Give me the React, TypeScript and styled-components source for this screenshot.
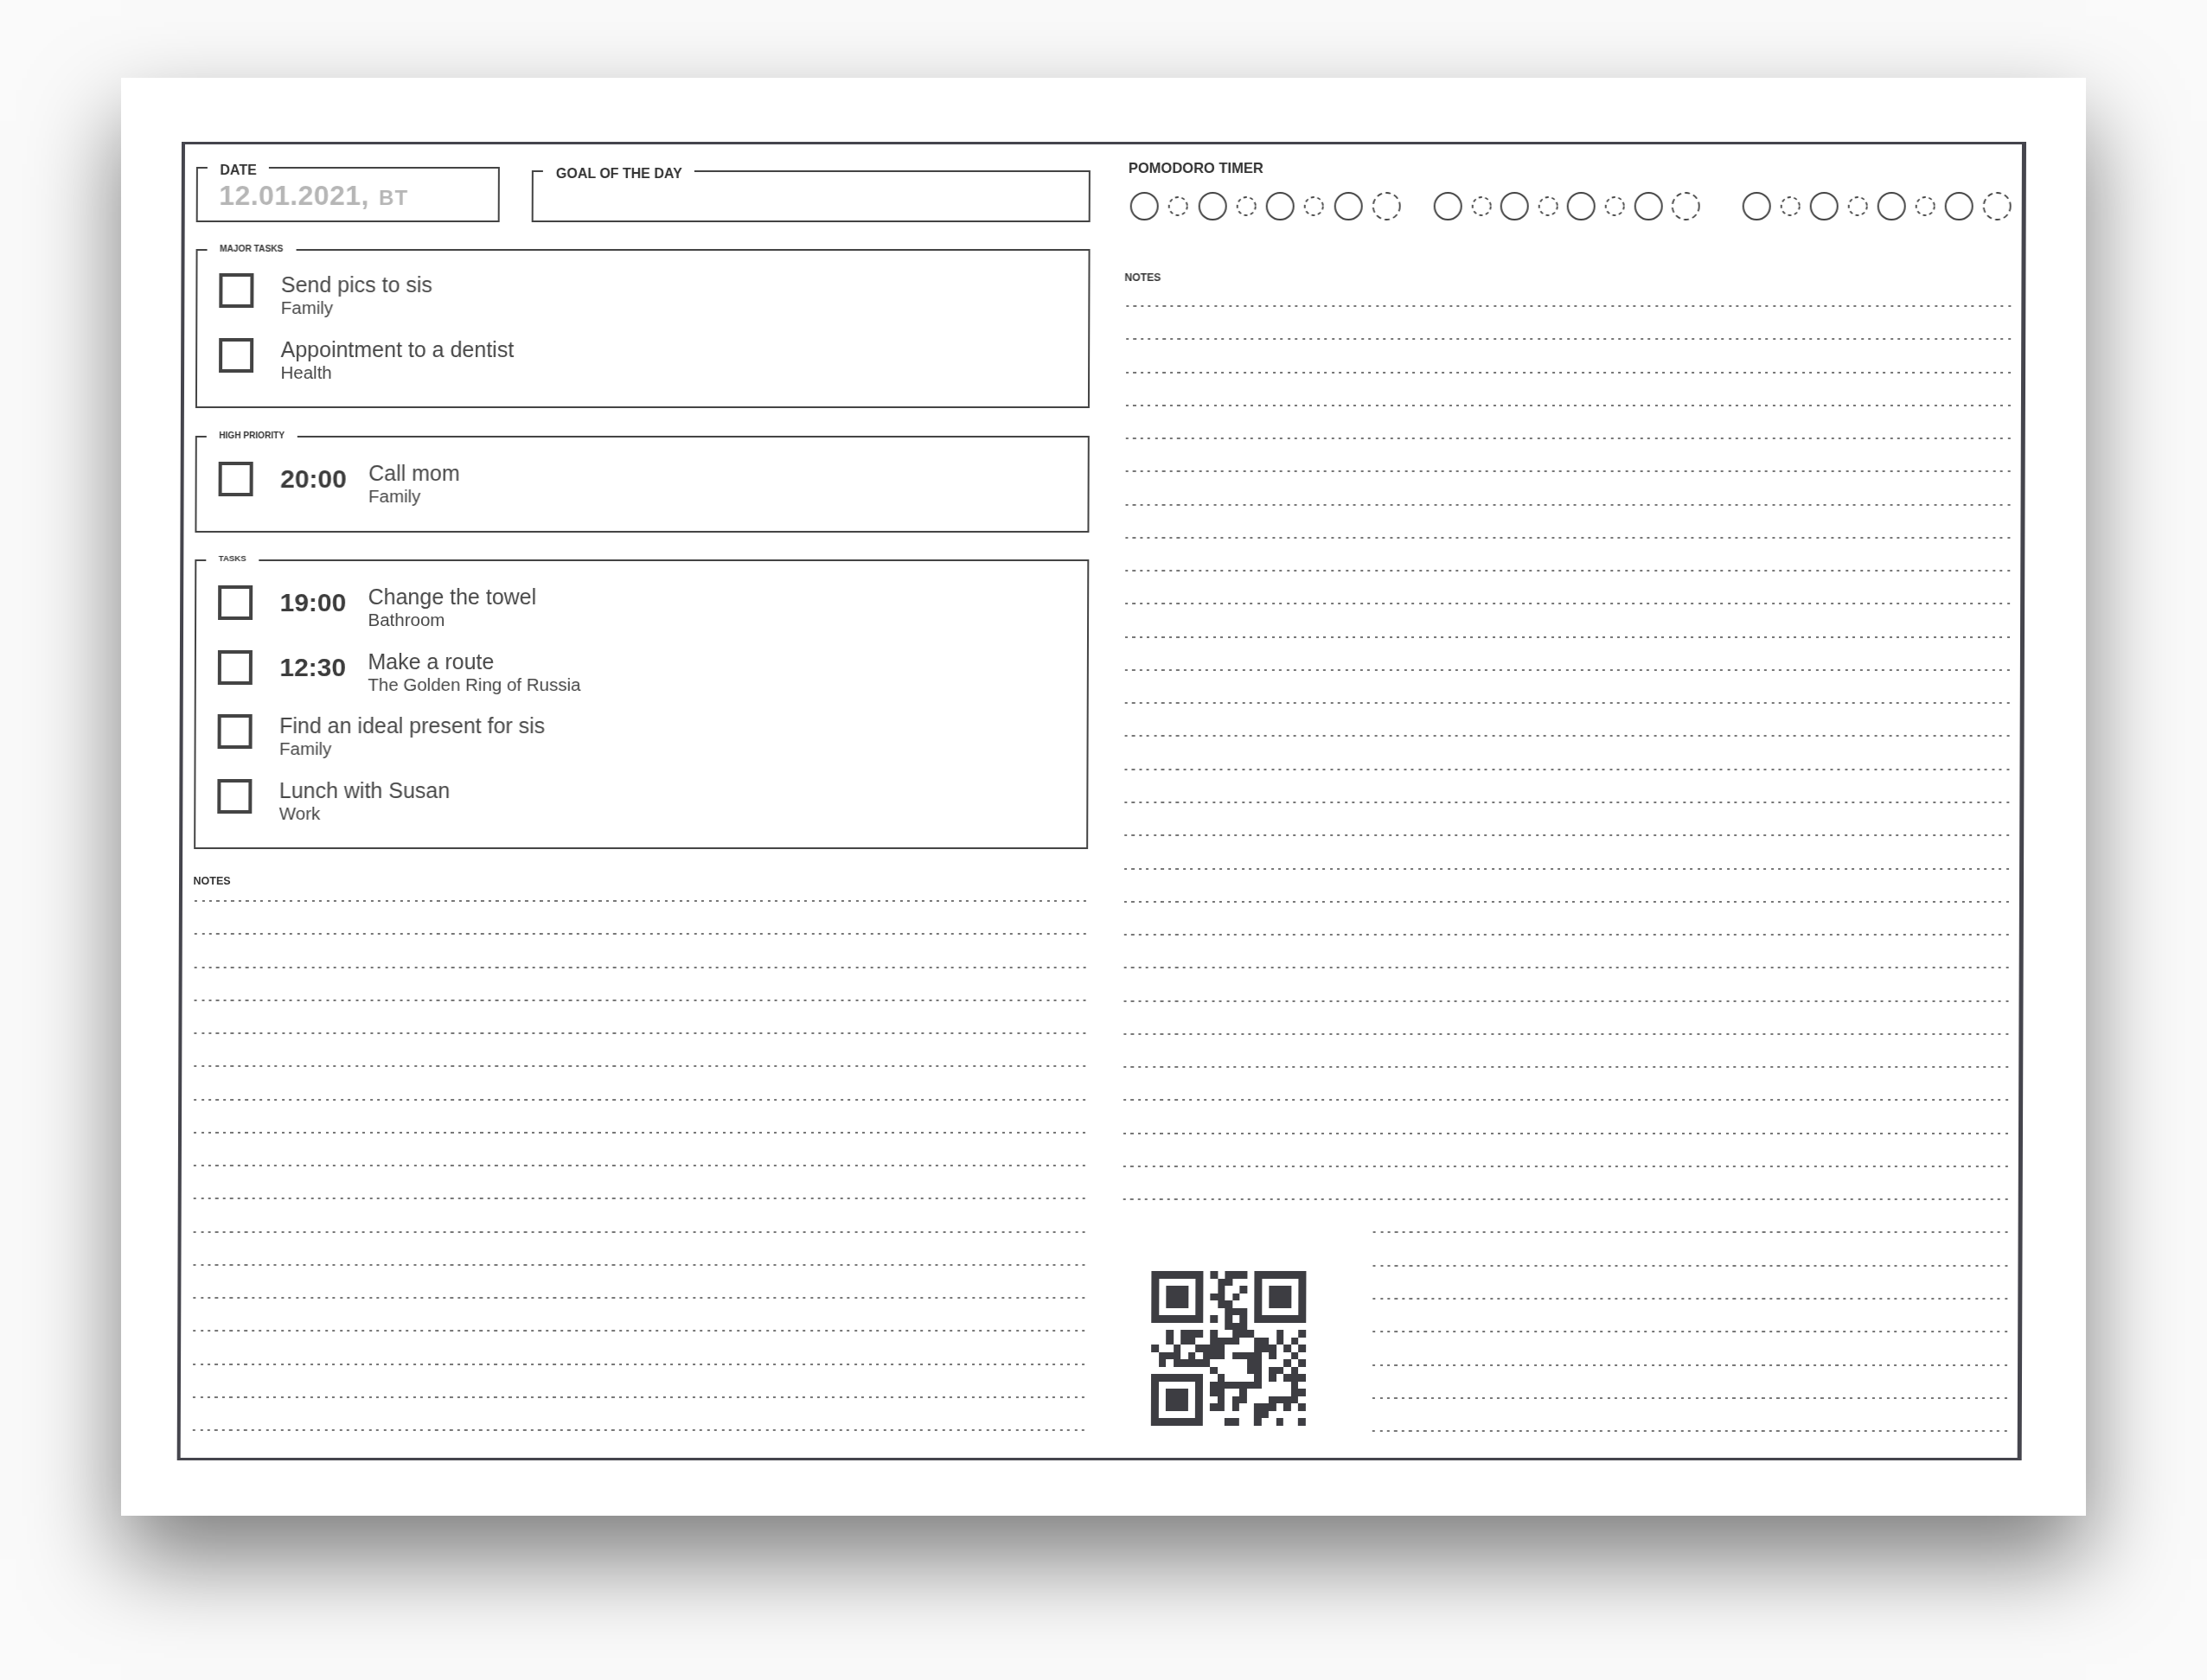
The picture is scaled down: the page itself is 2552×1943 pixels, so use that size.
import React from "react";
import styled, { createGlobalStyle } from "styled-components";

const Global = createGlobalStyle`
  html, body { margin: 0; padding: 0; background: #fafafa; }
  body { font-family: "Liberation Sans", Arial, sans-serif; color: #3c3c3c; }
`;

const Page = styled.div`
  width: 2552px;
  height: 1943px;
  padding: 90px 0 0 140px;
  box-sizing: border-box;
  overflow: hidden;
`;

const Paper = styled.main`
  width: 2272px;
  height: 1663px;
  box-sizing: border-box;
  padding: 74px 0 0 70px;
  background: #fff;
  box-shadow: 0 50px 100px rgba(0, 0, 0, 0.5);
`;

const Frame = styled.div`
  width: 2133px;
  height: 1525px;
  box-sizing: border-box;
  border: 3px solid #45454d;
  border-left-width: 4px;
  border-right-width: 5px;
  padding: 18px 10px 0 12.5px;
  display: grid;
  grid-template-columns: 1034.5px 1027px;
  column-gap: 40px;
  transform: skewX(-0.2deg);
  transform-origin: top left;
  filter: blur(0.45px);
`;

const Column = styled.section`
  display: flex;
  flex-direction: column;
  min-width: 0;
`;

const TopRow = styled.div`
  display: flex;
  align-items: flex-end;
  justify-content: space-between;
  height: 64px;
  margin-top: 8px;
`;

const Box = styled.div<{ $w?: number; $h: number; $pad?: number; $mt?: number }>`
  position: relative;
  box-sizing: border-box;
  width: ${(p) => (p.$w ? `${p.$w}px` : "100%")};
  height: ${(p) => p.$h}px;
  margin-top: ${(p) => p.$mt ?? 0}px;
  border: 2px solid #444;
  padding: ${(p) => p.$pad ?? 0}px 0 0 25px;
`;

const Legend = styled.span<{ $size: number; $top: number }>`
  position: absolute;
  left: 11px;
  top: ${(p) => p.$top}px;
  padding: 0 14px 0 15px;
  background: #fff;
  font-size: ${(p) => p.$size}px;
  font-weight: 700;
  line-height: ${(p) => (p.$size > 12 ? 18 : 14)}px;
  color: #333;
  white-space: nowrap;
`;

const DateValue = styled.div`
  padding-top: 13px;
  font-size: 32px;
  font-weight: 700;
  line-height: 36px;
  letter-spacing: 0.4px;
  color: #b6b6b6;
  white-space: nowrap;
`;

const Weekday = styled.span`
  margin-left: 2px;
  font-size: 24px;
  letter-spacing: 2px;
`;

const Row = styled.div`
  display: flex;
  align-items: flex-start;
  height: 74.5px;
`;

const Check = styled.span`
  flex: none;
  box-sizing: border-box;
  width: 40px;
  height: 40px;
  margin-top: 1px;
  margin-right: 32px;
  border: 4px solid #444;
`;

const Time = styled.span`
  flex: none;
  width: 102px;
  padding-top: 3px;
  font-size: 30px;
  font-weight: 700;
  line-height: 36px;
  color: #3c3c3c;
`;

const TaskText = styled.div`
  display: flex;
  flex-direction: column;
`;

const Title = styled.span`
  font-size: 25px;
  line-height: 28px;
  color: #474747;
  white-space: nowrap;
`;

const Sub = styled.span`
  font-size: 20.5px;
  line-height: 26px;
  color: #474747;
  white-space: nowrap;
`;

const NotesLabel = styled.h3<{ $mt: number; $size: number }>`
  margin: ${(p) => p.$mt}px 0 0;
  font-size: ${(p) => p.$size}px;
  font-weight: 700;
  line-height: 14px;
  color: #333;
`;

const Lines = styled.div<{ $mt: number; $ml?: number; $w?: number }>`
  display: flex;
  flex-direction: column;
  gap: 36.28px;
  margin: ${(p) => p.$mt}px 0 0 ${(p) => p.$ml ?? 0}px;
  width: ${(p) => (p.$w ? `${p.$w}px` : "100%")};
  flex: none;
`;

const Line = styled.div`
  height: 2px;
  background-image: repeating-linear-gradient(
    90deg,
    #777 0 3px,
    transparent 3px 8.5px
  );
`;

const PomodoroTitle = styled.h2`
  margin: 0;
  padding-left: 4px;
  font-size: 16.5px;
  font-weight: 700;
  line-height: 18px;
  color: #333;
`;

const Timer = styled.div`
  display: flex;
  margin-top: 18px;
  padding-left: 6px;
  height: 34px;
`;

const TimerGroup = styled.div<{ $ml?: number; $gap: number }>`
  display: flex;
  align-items: center;
  gap: ${(p) => p.$gap}px;
  margin-left: ${(p) => p.$ml ?? 0}px;
`;

const Ring = styled.svg`
  display: block;
  flex: none;
  overflow: visible;
`;

const BottomRow = styled.div`
  display: flex;
  align-items: flex-start;
  margin-top: 36.28px;
`;

const QrBox = styled.svg`
  flex: none;
  display: block;
  width: 179px;
  height: 179px;
  margin: 46px 0 0 35px;
`;

const RightLinesWrap = styled.div`
  margin-left: 77px;
  width: 738px;
`;

const QR_ROWS: number[][] = [
  [8, 10, 11, 12],
  [9, 10],
  [9, 12],
  [8, 9, 11],
  [9, 10],
  [10, 11, 12],
  [8, 10, 12],
  [10, 11, 12],
  [2, 4, 5, 6, 8, 11, 12, 13, 17, 20],
  [2, 4, 5, 8, 9, 10, 11, 14, 15, 17, 19],
  [0, 3, 6, 7, 8, 9, 14, 15, 16, 18, 20],
  [1, 2, 3, 5, 7, 8, 9, 11, 12, 13, 14, 16, 19],
  [1, 3, 4, 5, 6, 7, 13, 14, 18, 20],
  [8, 13, 14, 16, 17, 19],
  [9, 14, 16, 18, 19, 20],
  [8, 9, 10, 11, 12, 13, 14, 19],
  [8, 9, 12, 19, 20],
  [9, 11, 12, 16, 17, 18, 19],
  [8, 9, 11, 14, 15, 16, 18, 20],
  [14, 15],
  [10, 11, 14, 17, 20],
];

const Finder = ({ x, y }: { x: number; y: number }) => (
  <g>
    <path
      fillRule="evenodd"
      d={`M${x} ${y}h7v7h-7zM${x + 1} ${y + 1}v5h5v-5z`}
    />
    <rect x={x + 2} y={y + 2} width={3} height={3} />
  </g>
);

const QrCode = () => (
  <QrBox viewBox="0 0 21 21" fill="#3d3d42" shapeRendering="crispEdges">
    <Finder x={0} y={0} />
    <Finder x={14} y={0} />
    <Finder x={0} y={14} />
    {QR_ROWS.map((cols, r) =>
      cols.map((c) => <rect key={`${r}-${c}`} x={c} y={r} width={1} height={1} />)
    )}
  </QrBox>
);

const Circle = ({ size, dash }: { size: number; dash?: string }) => (
  <Ring width={size} height={size} viewBox={`0 0 ${size} ${size}`}>
    <circle
      cx={size / 2}
      cy={size / 2}
      r={size / 2 - 1}
      fill="none"
      stroke="#444"
      strokeWidth={dash ? 1.8 : 2}
      strokeDasharray={dash}
    />
  </Ring>
);

const Group = ({ ml, gap }: { ml?: number; gap: number }) => (
  <TimerGroup $ml={ml} $gap={gap}>
    <Circle size={33} />
    <Circle size={23} dash="4 3.6" />
    <Circle size={33} />
    <Circle size={23} dash="4 3.6" />
    <Circle size={33} />
    <Circle size={23} dash="4 3.6" />
    <Circle size={33} />
    <Circle size={33} dash="6 4.2" />
  </TimerGroup>
);

type Task = { time?: string; title: string; sub: string };

const Tasks = ({ items }: { items: Task[] }) => (
  <>
    {items.map((t) => (
      <Row key={t.title}>
        <Check />
        {t.time && <Time>{t.time}</Time>}
        <TaskText>
          <Title>{t.title}</Title>
          <Sub>{t.sub}</Sub>
        </TaskText>
      </Row>
    ))}
  </>
);

const range = (n: number) => Array.from({ length: n }, (_, i) => i);

export default function App() {
  return (
    <Page>
      <Global />
      <Paper>
        <Frame>
          <Column>
            <TopRow>
              <Box $w={351} $h={64}>
                <Legend $size={16} $top={-7}>DATE</Legend>
                <DateValue>
                  12.01.2021, <Weekday>ВТ</Weekday>
                </DateValue>
              </Box>
              <Box $w={646} $h={60}>
                <Legend $size={16} $top={-7}>GOAL OF THE DAY</Legend>
              </Box>
            </TopRow>

            <Box $h={184} $mt={31} $pad={25}>
              <Legend $size={10.2} $top={-9}>MAJOR TASKS</Legend>
              <Tasks
                items={[
                  { title: "Send pics to sis", sub: "Family" },
                  { title: "Appointment to a dentist", sub: "Health" },
                ]}
              />
            </Box>

            <Box $h={112} $mt={32} $pad={27}>
              <Legend $size={10.1} $top={-9}>HIGH PRIORITY</Legend>
              <Tasks items={[{ time: "20:00", title: "Call mom", sub: "Family" }]} />
            </Box>

            <Box $h={335} $mt={31} $pad={27}>
              <Legend $size={9.6} $top={-10}>TASKS</Legend>
              <Tasks
                items={[
                  { time: "19:00", title: "Change the towel", sub: "Bathroom" },
                  { time: "12:30", title: "Make a route", sub: "The Golden Ring of Russia" },
                  { title: "Find an ideal present for sis", sub: "Family" },
                  { title: "Lunch with Susan", sub: "Work" },
                ]}
              />
            </Box>

            <NotesLabel $mt={30} $size={12.5}>NOTES</NotesLabel>
            <Lines $mt={15} $ml={1} $w={1037}>
              {range(17).map((i) => (
                <Line key={i} />
              ))}
            </Lines>
          </Column>

          <Column>
            <PomodoroTitle>POMODORO TIMER</PomodoroTitle>
            <Timer>
              <Group gap={11.3} />
              <Group gap={10.6} ml={38} />
              <Group gap={11} ml={49} />
            </Timer>
            <NotesLabel $mt={59} $size={12.2}>NOTES</NotesLabel>
            <Lines $mt={25} $ml={2} $w={1025}>
              {range(28).map((i) => (
                <Line key={i} />
              ))}
            </Lines>
            <BottomRow>
              <QrCode />
              <RightLinesWrap>
                <Lines $mt={0}>
                  {range(7).map((i) => (
                    <Line key={i} />
                  ))}
                </Lines>
              </RightLinesWrap>
            </BottomRow>
          </Column>
        </Frame>
      </Paper>
    </Page>
  );
}
